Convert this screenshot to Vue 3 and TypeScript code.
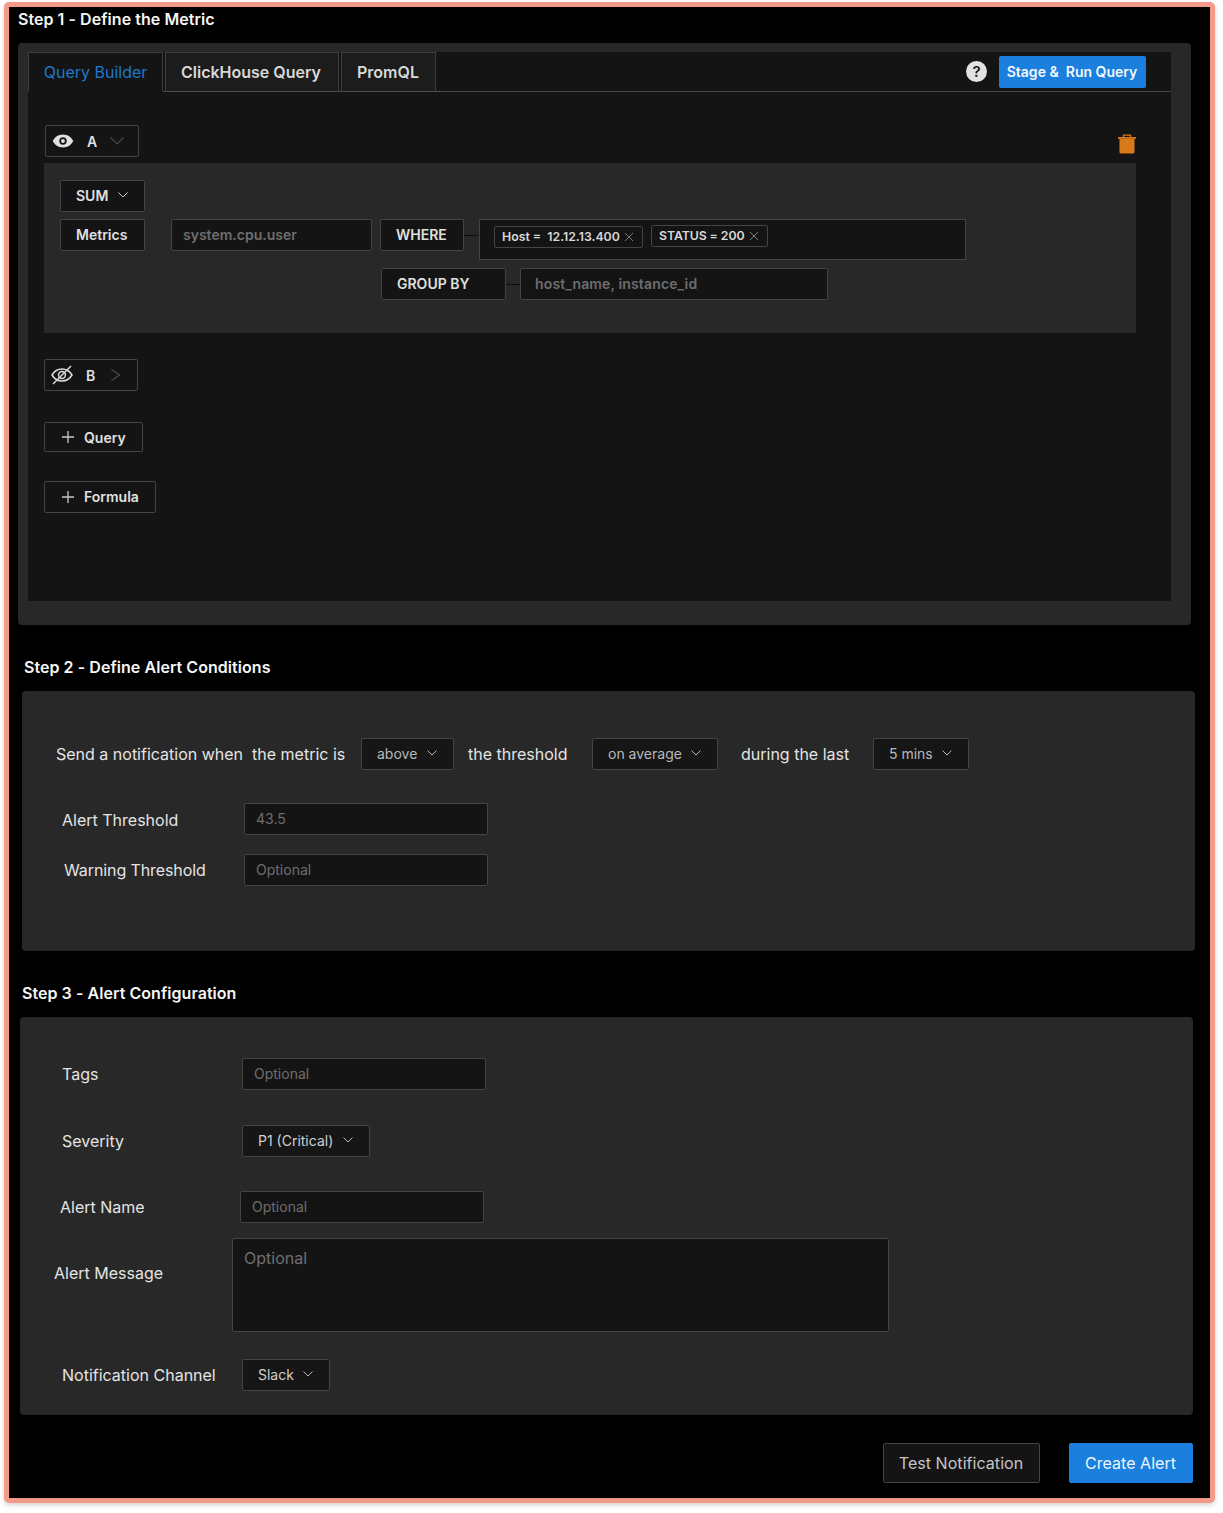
<script setup lang="ts">
const tabs: string[] = ['ClickHouse Query', 'PromQL']
</script>

<template>
  <div class="frame">
    <section class="step step-one">
      <h2 class="title">Step 1 - Define the Metric</h2>
      <div class="card card-one">
        <div class="panel">
          <div class="tabs">
            <button class="tab tab-active">Query Builder</button>
            <button v-for="(t, i) in tabs" :key="t" class="tab" :class="i === 0 ? 'tab-ch' : 'tab-prom'">{{ t }}</button>
            <span class="tabs-fill"></span>
            <span class="help">?</span>
            <button class="run">Stage &amp;&nbsp; Run Query</button>
          </div>

          <div class="query-head">
            <div class="chip chip-a">
              <svg class="eye" width="22" height="16" viewBox="0 0 22 16">
                <path fill="#e0e0e0" fill-rule="evenodd" d="M11 1.500C6.300 1.500 2.600 4.300.7 8c1.900 3.700 5.600 6.500 10.300 6.500S19.400 11.700 21.300 8C19.400 4.300 15.700 1.500 11 1.500ZM11 4.300a3.700 3.700 0 1 1 0 7.400 3.700 3.700 0 0 1 0-7.400Zm0 1.800a1.900 1.900 0 1 0 0 3.800 1.900 1.900 0 0 0 0-3.800Z"/>
              </svg>
              <span class="chip-letter">A</span>
              <svg class="chip-chev" width="14" height="8" viewBox="0 0 14 8"><path d="M.5.5 7 7 13.500.5" fill="none" stroke="#4a4a4a" stroke-width="1.200"/></svg>
            </div>
            <svg class="trash" width="18" height="20" viewBox="0 0 18 20">
              <path fill="none" stroke="#d97a1a" stroke-width="1.300" d="M5.500 3V1.200h7V3"/>
              <path fill="#d97a1a" d="M0 3h18v1.800H0z"/>
              <path fill="#d97a1a" d="M1.500 4.800h15V18a1.500 1.500 0 0 1-1.500 1.500H3A1.500 1.500 0 0 1 1.500 18z"/>
            </svg>
          </div>

          <div class="builder">
            <div class="ctl ctl-sum">
              SUM
              <svg class="chev" width="10" height="6" viewBox="0 0 10 6"><path d="M.5.500 5 5 9.500.500" fill="none" stroke="#c8c8c8" stroke-width="1"/></svg>
            </div>
            <div class="builder-row">
              <div class="ctl ctl-metrics">Metrics</div>
              <input class="field field-metric" placeholder="system.cpu.user" />
              <div class="ctl ctl-where">WHERE</div>
              <span class="link"></span>
              <div class="tag-box">
                <span class="tag tag-host">Host =&nbsp; 12.12.13.400<svg class="x" width="10" height="10" viewBox="0 0 10 10"><path d="M1 1l8 8M9 1l-8 8" stroke="#7a7a7a" stroke-width="1"/></svg></span>
                <span class="tag tag-status">STATUS = 200<svg class="x" width="10" height="10" viewBox="0 0 10 10"><path d="M1 1l8 8M9 1l-8 8" stroke="#7a7a7a" stroke-width="1"/></svg></span>
              </div>
            </div>
            <div class="builder-row group-row">
              <div class="ctl ctl-group">GROUP BY</div>
              <span class="link link-group"></span>
              <input class="field field-group" placeholder="host_name, instance_id" />
            </div>
          </div>

          <div class="chip chip-b">
            <svg width="22" height="20" viewBox="0 0 22 20">
              <path fill="none" stroke="#dcdcdc" stroke-width="1.500" d="M1 10c2-3.400 5.500-6 10-6s8 2.600 10 6c-2 3.400-5.500 6-10 6s-8-2.600-10-6Z"/>
              <circle cx="11" cy="10" r="3.400" fill="none" stroke="#dcdcdc" stroke-width="1.500"/>
              <path d="M2 19 20 1" stroke="#dcdcdc" stroke-width="1.500"/>
            </svg>
            <span class="chip-letter chip-letter-b">B</span>
            <svg class="chip-chev-b" width="9" height="12" viewBox="0 0 9 12"><path d="M.5.500 8.500 6 .5 11.500" fill="none" stroke="#4a4a4a" stroke-width="1.200"/></svg>
          </div>

          <button class="add add-query">
            <svg width="12" height="12" viewBox="0 0 12 12"><path d="M6 0v12M0 6h12" stroke="#c8c8c8" stroke-width="1.300"/></svg>
            <span class="add-text">Query</span>
          </button>
          <button class="add add-formula">
            <svg width="12" height="12" viewBox="0 0 12 12"><path d="M6 0v12M0 6h12" stroke="#c8c8c8" stroke-width="1.300"/></svg>
            <span>Formula</span>
          </button>
        </div>
      </div>
    </section>

    <section class="step step-two">
      <h2 class="title">Step 2 - Define Alert Conditions</h2>
      <div class="card card-two">
        <div class="sentence">
          <span class="sent-a">Send a notification when&nbsp; the metric is</span>
          <div class="select sel-above">above<svg class="chev" width="10" height="6" viewBox="0 0 10 6"><path d="M.5.500 5 5 9.500.500" fill="none" stroke="#b8b8b8" stroke-width="1"/></svg></div>
          <span class="sent-b">the threshold</span>
          <div class="select sel-avg">on average<svg class="chev" width="10" height="6" viewBox="0 0 10 6"><path d="M.5.500 5 5 9.500.500" fill="none" stroke="#b8b8b8" stroke-width="1"/></svg></div>
          <span class="sent-c">during the last</span>
          <div class="select sel-mins">5 mins<svg class="chev" width="10" height="6" viewBox="0 0 10 6"><path d="M.5.500 5 5 9.500.500" fill="none" stroke="#b8b8b8" stroke-width="1"/></svg></div>
        </div>
        <div class="form-row row-alert">
          <label class="lbl lbl-alert">Alert Threshold</label>
          <input class="field field-plain" placeholder="43.5" />
        </div>
        <div class="form-row row-warn">
          <label class="lbl lbl-warn">Warning Threshold</label>
          <input class="field field-plain" placeholder="Optional" />
        </div>
      </div>
    </section>

    <section class="step step-three">
      <h2 class="title">Step 3 - Alert Configuration</h2>
      <div class="card card-three">
        <div class="form-row row-tags">
          <label class="lbl lbl-tags">Tags</label>
          <input class="field field-plain" placeholder="Optional" />
        </div>
        <div class="form-row row-sev">
          <label class="lbl lbl-tags">Severity</label>
          <div class="select sel-sev">P1 (Critical)<svg class="chev" width="10" height="6" viewBox="0 0 10 6"><path d="M.5.500 5 5 9.500.500" fill="none" stroke="#b8b8b8" stroke-width="1"/></svg></div>
        </div>
        <div class="form-row row-name">
          <label class="lbl lbl-name">Alert Name</label>
          <input class="field field-plain" placeholder="Optional" />
        </div>
        <div class="form-row row-msg">
          <label class="lbl lbl-msg">Alert Message</label>
          <textarea class="area" placeholder="Optional"></textarea>
        </div>
        <div class="form-row row-chan">
          <label class="lbl lbl-tags">Notification Channel</label>
          <div class="select sel-slack">Slack<svg class="chev" width="10" height="6" viewBox="0 0 10 6"><path d="M.5.500 5 5 9.500.500" fill="none" stroke="#b8b8b8" stroke-width="1"/></svg></div>
        </div>
      </div>
    </section>

    <div class="actions">
      <button class="btn-test">Test Notification</button>
      <button class="btn-create">Create Alert</button>
    </div>
  </div>
</template>

<style>
html, body { margin: 0; background: #fff; }
</style>

<style scoped>
* { box-sizing: border-box; }
.frame {
  width: 1211px;
  height: 1501px;
  margin: 2px 0 10px 4px;
  border: 5px solid #f59a88;
  border-radius: 5px;
  background: #000;
  box-shadow: 0 2px 5px rgba(0, 0, 0, 0.18);
  font-family: Inter, "Liberation Sans", sans-serif;
  color: #e6e6e6;
  overflow: hidden;
}
.title {
  margin: 0;
  font-size: 16px;
  line-height: 24px;
  font-weight: 600;
  letter-spacing: 0.05px;
  color: #f5f5f5;
}
.card { width: 1173px; margin-top: 12px; background: #282828; border-radius: 4px; }
.step-one { margin-left: 9px; }
.step-two { margin: 30px 0 0 13px; }
.step-three { margin: 30px 0 0 11px; }
.step-two .title { margin-left: 2px; }
.step-three .title { margin-left: 2px; }
.card-one { height: 582px; padding: 9px 20px 24px 10px; }
.card-two { height: 260px; padding-top: 47px; }
.card-three { height: 398px; padding-top: 41px; }

.panel { height: 549px; background: #141414; }
.tabs { display: flex; align-items: center; height: 40px; border-bottom: 1px solid #4a4a4a; }
.tab {
  height: 40px;
  margin-right: 2px;
  padding: 0;
  background: #1c1c1c;
  border: 1px solid #3e3e3e;
  border-bottom: 1px solid #4a4a4a;
  font: 600 16px/24px Inter, sans-serif;
  color: #d8d8d8;
  white-space: nowrap;
}
.tab-ch { width: 174px; padding-right: 2px; }
.tab-prom { width: 95px; padding-right: 1px; }
.tab-active {
  width: 135px;
  background: #141414;
  border-bottom-color: #141414;
  font-weight: 400;
  color: #1f78c8;
}
.tabs-fill { flex: 1; }
.help {
  width: 21px;
  height: 21px;
  border-radius: 50%;
  background: #e2e2e2;
  color: #1c1c1c;
  font-size: 15px;
  line-height: 21px;
  font-weight: 600;
  text-align: center;
  margin: 0 12px 1px 0;
}
.run {
  width: 147px;
  height: 32px;
  margin-right: 25px;
  padding: 0 1px 0 0;
  border: 0;
  border-radius: 2px;
  background: #1a7fdd;
  color: #f2f7fc;
  font: 600 14px/20px Inter, sans-serif;
}

.query-head { display: flex; justify-content: space-between; align-items: flex-start; margin-top: 33px; padding-left: 17px; width: 1108px; }
.chip {
  display: flex;
  align-items: center;
  width: 94px;
  height: 32px;
  background: #141414;
  border: 1px solid #444;
  border-radius: 2px;
  font-size: 14px;
  font-weight: 600;
  color: #e0e0e0;
}
.eye { margin-left: 6px; }
.chip-letter { margin-left: 13px; width: 11px; }
.chip-chev { margin-left: 12px; }
.trash { margin-top: 9px; }

.builder { width: 1092px; height: 170px; margin: 6px 0 0 16px; padding: 17px 0 0 16px; background: #282828; }
.builder-row { display: flex; align-items: flex-start; margin-top: 7px; }
.group-row { margin: 8px 0 0 321px; }
.ctl {
  display: flex;
  align-items: center;
  height: 32px;
  padding: 0 0 2px 15px;
  background: #141414;
  border: 1px solid #444;
  border-radius: 2px;
  font-size: 14px;
  font-weight: 600;
  color: #e0e0e0;
  white-space: nowrap;
}
.ctl-sum { width: 85px; }
.ctl-sum .chev { margin-left: 10px; }
.ctl-metrics { width: 85px; margin-right: 26px; }
.ctl-where { width: 84px; margin-left: 8px; }
.ctl-group { width: 125px; }
.link { width: 15px; height: 1px; margin-top: 16px; background: #0c0c0c; }
.link-group { width: 14px; }
.field {
  height: 32px;
  padding: 0 11px 2px;
  background: #141414;
  border: 1px solid #444;
  border-radius: 2px;
  outline: none;
  font: 400 14px/20px Inter, sans-serif;
  color: #e0e0e0;
}
.field::placeholder { color: #6e6e6e; opacity: 1; }
.field-metric { width: 201px; font-weight: 600; }
.field-group { width: 308px; padding-left: 14px; font-weight: 600; letter-spacing: 0.14px; }
.field-plain { width: 244px; }
.tag-box {
  position: relative;
  width: 487px;
  height: 41px;
  padding-left: 14px;
  background: #141414;
  border: 1px solid #444;
  display: flex;
  align-items: flex-start;
  gap: 8px;
}
.tag {
  display: inline-flex;
  align-items: center;
  height: 22px;
  padding: 0 0 1px 7px;
  border: 1px solid #444;
  border-radius: 2px;
  font-size: 12.3px;
  font-weight: 600;
  color: #d8d8d8;
  white-space: nowrap;
}
.tag-host { width: 149px; margin-top: 6px; }
.tag-status { width: 117px; margin-top: 5px; letter-spacing: -0.08px; }
.x { margin-left: 5px; }
.tag-host .x { margin-left: 4px; }

.chip-b { margin: 26px 0 0 16px; }
.chip-b svg:first-child { margin-left: 6px; }
.chip-letter-b { margin-left: 13px; width: 9px; font-size: 14px; }
.chip-chev-b { margin-left: 16px; }
.add {
  display: flex;
  align-items: center;
  gap: 10px;
  padding: 0 0 0 17px;
  background: #141414;
  border: 1px solid #444;
  border-radius: 2px;
  font: 600 14px/20px Inter, sans-serif;
  color: #e0e0e0;
  margin-left: 16px;
}
.add-query { width: 99px; height: 30px; margin-top: 31px; }
.add-text { position: relative; top: 1px; }
.add-formula { width: 112px; height: 32px; margin-top: 29px; }

.sentence { display: flex; align-items: center; height: 32px; font-size: 16px; color: #e4e4e4; white-space: nowrap; }
.sent-a { margin-left: 34px; width: 305px; }
.sent-b { margin-left: 14px; width: 124px; }
.sent-c { margin-left: 23px; width: 132px; }
.select {
  display: flex;
  align-items: center;
  justify-content: space-between;
  height: 32px;
  padding: 0 16px 2px 15px;
  background: #161616;
  border: 1px solid #444;
  border-radius: 2px;
  font-size: 14px;
  color: #b8b8b8;
  white-space: nowrap;
}
.sel-above { width: 93px; }
.sel-avg { width: 126px; }
.sel-mins { width: 96px; }
.sel-sev { width: 128px; color: #d0d0d0; }
.sel-slack { width: 88px; color: #d0d0d0; }

.form-row { display: flex; align-items: center; font-size: 16px; color: #e4e4e4; }
.lbl { white-space: nowrap; }
.row-alert { margin-top: 33px; }
.row-warn { margin-top: 19px; }
.lbl-alert { margin: 2px 0 0 40px; width: 182px; }
.lbl-warn { margin-left: 42px; width: 180px; letter-spacing: -0.1px; }
.lbl-tags { margin-left: 42px; width: 180px; }
.lbl-name { margin-left: 40px; width: 180px; }
.lbl-msg { margin: -24px 0 0 34px; width: 178px; }
.row-sev { margin-top: 35px; }
.row-name { margin-top: 34px; }
.row-msg { margin-top: 15px; }
.row-chan { margin-top: 27px; }
.area {
  width: 657px;
  height: 94px;
  padding: 7px 11px;
  background: #141414;
  border: 1px solid #444;
  border-radius: 2px;
  outline: none;
  resize: none;
  font: 400 16px/24px Inter, sans-serif;
  color: #e0e0e0;
}
.area::placeholder { color: #6e6e6e; opacity: 1; }

.actions { display: flex; justify-content: flex-end; gap: 29px; margin-top: 28px; padding-right: 17px; }
.btn-test, .btn-create {
  height: 40px;
  border-radius: 2px;
  font: 400 16px/24px Inter, sans-serif;
  letter-spacing: 0.05px;
  padding: 0 1px 0 0;
}
.btn-test { width: 157px; background: #141414; border: 1px solid #444; color: #c4c4c4; }
.btn-create { width: 124px; background: #1a7fdd; border: 0; color: #eef5fc; }
</style>
